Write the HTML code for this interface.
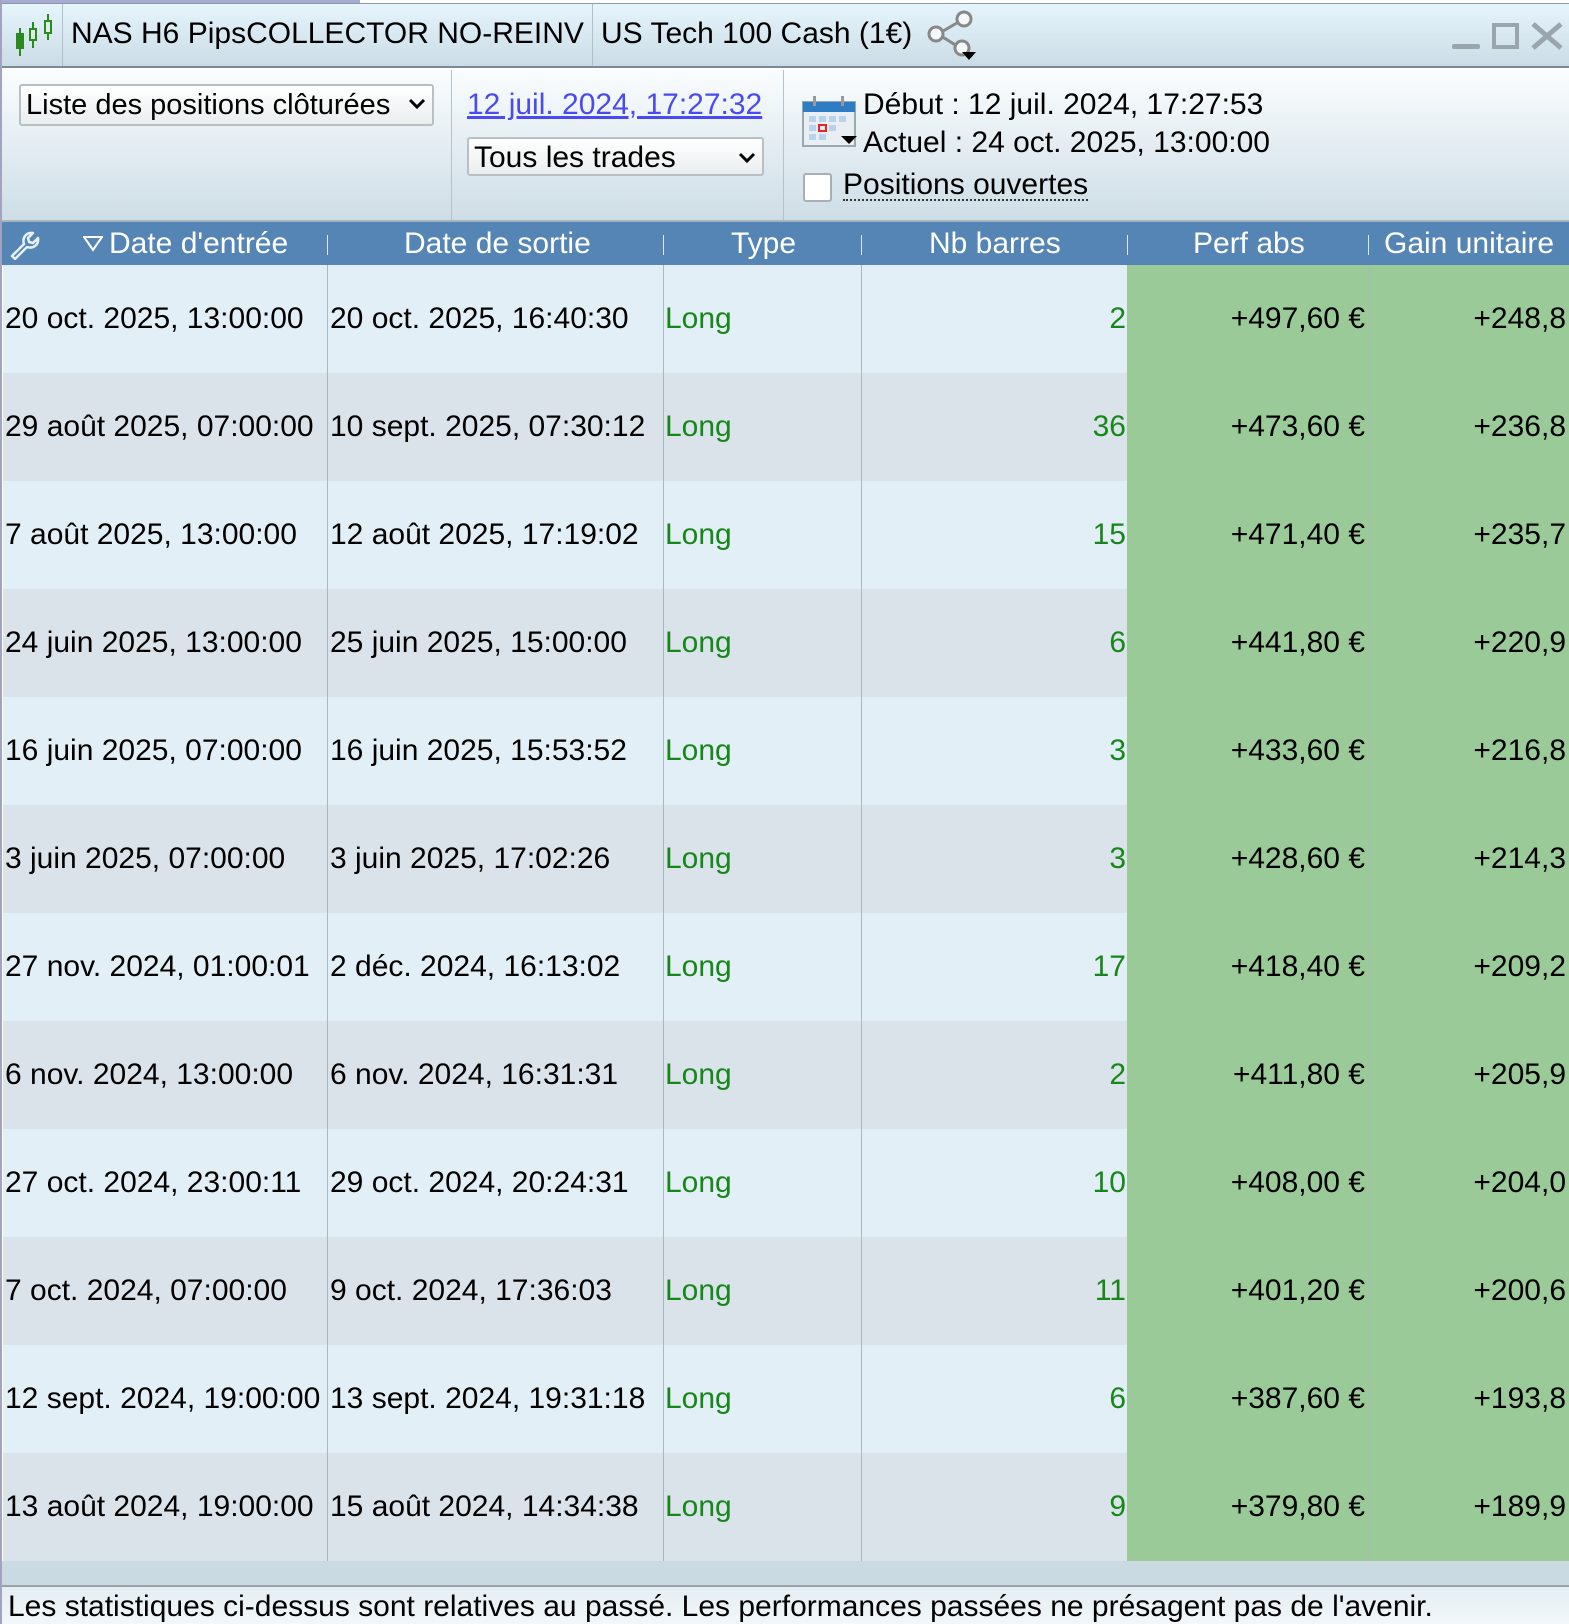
<!DOCTYPE html>
<html><head><meta charset="utf-8"><style>
*{margin:0;padding:0;box-sizing:border-box}
body{width:1569px;height:1624px;overflow:hidden;font-family:"Liberation Sans",Arial,sans-serif;background:#fff;position:relative}
.a{position:absolute}
.t{font-size:30px;white-space:nowrap}
.row{position:absolute;left:3px;width:1566px;height:108px}
.row div{position:absolute;top:0;height:108px;line-height:108px;font-size:30px;white-space:nowrap}
.hd{position:absolute;top:222px;height:43px;line-height:43px;color:#fff;font-size:30px;white-space:nowrap}
.hs{position:absolute;top:235px;width:1px;height:20px;background:#dfe8f0}
.vl{position:absolute;top:265px;width:1px;height:1296px;background:#aab6c0}
</style></head><body>
<div class="a" style="left:0;top:0;width:360px;height:3px;background:#a9a9d6"></div>
<div class="a" style="left:0;top:0;width:2px;height:1624px;background:#a0a4c0"></div>
<div class="a" style="left:2px;top:3px;width:1567px;height:65px;background:linear-gradient(#e6f5fc,#cbdce6);border-top:1px solid #8a9aa5;border-bottom:2px solid #7d8a93"></div>
<svg class="a" style="left:12px;top:12px" width="44" height="46" viewBox="0 0 44 46">
<g stroke="#2a8a1e" stroke-width="2" fill="#2a8a1e"><line x1="8" y1="16" x2="8" y2="44"/><rect x="5" y="22" width="6" height="14"/><line x1="21" y1="10" x2="21" y2="36"/><rect x="18" y="17" width="6" height="11" fill="#e0f0e0"/><line x1="36" y1="2" x2="36" y2="28"/><rect x="33" y="9" width="6" height="12" fill="#e0f0e0"/></g></svg>
<div class="a" style="left:62px;top:4px;width:1px;height:62px;background:#b0c0ca"></div>
<div class="a t" style="left:71px;top:17px">NAS H6 PipsCOLLECTOR NO-REINV</div>
<div class="a" style="left:592px;top:4px;width:1px;height:62px;background:#b0c0ca"></div>
<div class="a t" style="left:601px;top:17px">US Tech 100 Cash (1€)</div>
<svg class="a" style="left:924px;top:10px" width="56" height="50" viewBox="0 0 56 50">
<g stroke="#888" stroke-width="3" fill="#f4f8fa"><line x1="14" y1="24" x2="38" y2="10"/><line x1="14" y1="24" x2="36" y2="38"/><circle cx="12" cy="24" r="7"/><circle cx="40" cy="9" r="7"/><circle cx="38" cy="38" r="7"/></g><path d="M38 42h14l-7 8z" fill="#000"/></svg>
<div class="a" style="left:1452px;top:44px;width:28px;height:5px;background:#9aa6ae;border-radius:2px"></div>
<div class="a" style="left:1492px;top:23px;width:27px;height:26px;border:4px solid #9aa6ae"></div>
<svg class="a" style="left:1530px;top:22px" width="34" height="28"><path d="M3 2L31 26M31 2L3 26" stroke="#9aa6ae" stroke-width="5"/></svg>

<div class="a" style="left:2px;top:70px;width:1567px;height:152px;background:linear-gradient(#fafdfe,#cddde6)"></div>
<div class="a" style="left:19px;top:84px;width:415px;height:42px;border:2px solid #b8c0c6;border-radius:3px;background:linear-gradient(#fff,#eaeeef)"></div>
<div class="a t" style="left:26px;top:89px;font-size:29px">Liste des positions clôturées</div>
<svg class="a" style="left:408px;top:97px" width="18" height="14"><path d="M2 3l7 7 7-7" stroke="#000" stroke-width="3" fill="none"/></svg>
<div class="a" style="left:451px;top:70px;width:1px;height:152px;background:#b4c2cc"></div>
<div class="a t" style="left:467px;top:88px;color:#4a4af0;text-decoration:underline">12 juil. 2024, 17:27:32</div>
<div class="a" style="left:467px;top:137px;width:297px;height:39px;border:2px solid #b8c0c6;border-radius:3px;background:linear-gradient(#fff,#eaeeef)"></div>
<div class="a t" style="left:474px;top:141px">Tous les trades</div>
<svg class="a" style="left:738px;top:151px" width="18" height="14"><path d="M2 3l7 7 7-7" stroke="#000" stroke-width="3" fill="none"/></svg>
<div class="a" style="left:783px;top:70px;width:1px;height:152px;background:#b4c2cc"></div>
<svg class="a" style="left:801px;top:94px" width="58" height="56" viewBox="0 0 58 56">
<rect x="2" y="8" width="52" height="44" fill="#e8eef2" stroke="#9aa" stroke-width="2"/><rect x="2" y="8" width="52" height="10" fill="#2e7cc4"/>
<g fill="#b8d4ec"><rect x="8" y="22" width="7" height="6"/><rect x="18" y="22" width="7" height="6"/><rect x="28" y="22" width="7" height="6"/><rect x="38" y="22" width="7" height="6"/><rect x="8" y="31" width="7" height="6"/><rect x="28" y="31" width="7" height="6"/><rect x="8" y="40" width="7" height="6"/><rect x="18" y="40" width="7" height="6"/></g>
<rect x="18" y="31" width="7" height="6" fill="none" stroke="#e22" stroke-width="2"/>
<rect x="12" y="2" width="3" height="10" fill="#999"/><rect x="40" y="2" width="3" height="10" fill="#999"/><path d="M40 42h16l-8 8z" fill="#000"/></svg>
<div class="a t" style="left:863px;top:88px">Début : 12 juil. 2024, 17:27:53</div>
<div class="a t" style="left:863px;top:126px">Actuel : 24 oct. 2025, 13:00:00</div>
<div class="a" style="left:803px;top:173px;width:29px;height:29px;border:2px solid #a9b0b5;border-radius:3px;background:#fff"></div>
<div class="a t" style="left:843px;top:171px;border-bottom:2px dotted #333;line-height:28px">Positions ouvertes</div>

<div class="a" style="left:2px;top:220px;width:1567px;height:2px;background:#a6b4bc"></div>
<div class="a" style="left:2px;top:222px;width:1567px;height:43px;background:#5585b5"></div>
<svg class="a" style="left:8px;top:228px" width="32" height="32" viewBox="0 0 32 32"><path d="M4 28l12-12c-2-6 2-12 9-11l-5 5 1 4 4 1 5-5c1 7-5 11-11 9L7 31z" fill="none" stroke="#e8f0f8" stroke-width="2.5" stroke-linejoin="round"/></svg>
<svg class="a" style="left:83px;top:236px" width="20" height="16"><path d="M1 1h18L10 14z" fill="none" stroke="#fff" stroke-width="2"/></svg>
<div class="hd" style="left:109px">Date d'entrée</div>
<div class="hs" style="left:327px"></div>
<div class="hd" style="left:404px">Date de sortie</div>
<div class="hs" style="left:663px"></div>
<div class="hd" style="left:731px">Type</div>
<div class="hs" style="left:861px"></div>
<div class="hd" style="left:929px">Nb barres</div>
<div class="hs" style="left:1127px"></div>
<div class="hd" style="left:1193px">Perf abs</div>
<div class="hs" style="left:1368px"></div>
<div class="hd" style="left:1384px">Gain unitaire</div>

<div id="rows"></div>
<div class="a" style="left:1127px;top:265px;width:442px;height:1296px;background:#9bca99"></div>
<div class="vl" style="left:327px"></div><div class="vl" style="left:663px"></div><div class="vl" style="left:861px"></div><div class="vl" style="left:1369px"></div>
<div id="txt"></div>

<div class="a" style="left:2px;top:1561px;width:1567px;height:25px;background:#c9dae3"></div>
<div class="a" style="left:2px;top:1585px;width:1567px;height:2px;background:#9aa2a8"></div>
<div class="a" style="left:2px;top:1587px;width:1567px;height:37px;background:linear-gradient(#e4eef3,#f2f7fa)"></div>
<div class="a t" style="left:8px;top:1590px;font-size:30px">Les statistiques ci-dessus sont relatives au passé. Les performances passées ne présagent pas de l'avenir.</div>

<script>
var d=[["20 oct. 2025, 13:00:00","20 oct. 2025, 16:40:30","2","+497,60 €","+248,8"],
["29 août 2025, 07:00:00","10 sept. 2025, 07:30:12","36","+473,60 €","+236,8"],
["7 août 2025, 13:00:00","12 août 2025, 17:19:02","15","+471,40 €","+235,7"],
["24 juin 2025, 13:00:00","25 juin 2025, 15:00:00","6","+441,80 €","+220,9"],
["16 juin 2025, 07:00:00","16 juin 2025, 15:53:52","3","+433,60 €","+216,8"],
["3 juin 2025, 07:00:00","3 juin 2025, 17:02:26","3","+428,60 €","+214,3"],
["27 nov. 2024, 01:00:01","2 déc. 2024, 16:13:02","17","+418,40 €","+209,2"],
["6 nov. 2024, 13:00:00","6 nov. 2024, 16:31:31","2","+411,80 €","+205,9"],
["27 oct. 2024, 23:00:11","29 oct. 2024, 20:24:31","10","+408,00 €","+204,0"],
["7 oct. 2024, 07:00:00","9 oct. 2024, 17:36:03","11","+401,20 €","+200,6"],
["12 sept. 2024, 19:00:00","13 sept. 2024, 19:31:18","6","+387,60 €","+193,8"],
["13 août 2024, 19:00:00","15 août 2024, 14:34:38","9","+379,80 €","+189,9"]];
var bg="",tx="";
d.forEach(function(r,i){var y=265+i*108;
bg+='<div class="row" style="top:'+y+'px;background:'+(i%2?'#dbe3ea':'#e2eff7')+'"></div>';
tx+='<div class="row" style="top:'+y+'px"><div style="left:2px">'+r[0]+'</div><div style="left:327px">'+r[1]+'</div><div style="left:662px;color:#17871a">Long</div><div style="right:443px;color:#17871a">'+r[2]+'</div><div style="right:204px">'+r[3]+'</div><div style="right:3px">'+r[4]+'</div></div>';});
document.getElementById("rows").innerHTML=bg;document.getElementById("txt").innerHTML=tx;
</script>
</body></html>
